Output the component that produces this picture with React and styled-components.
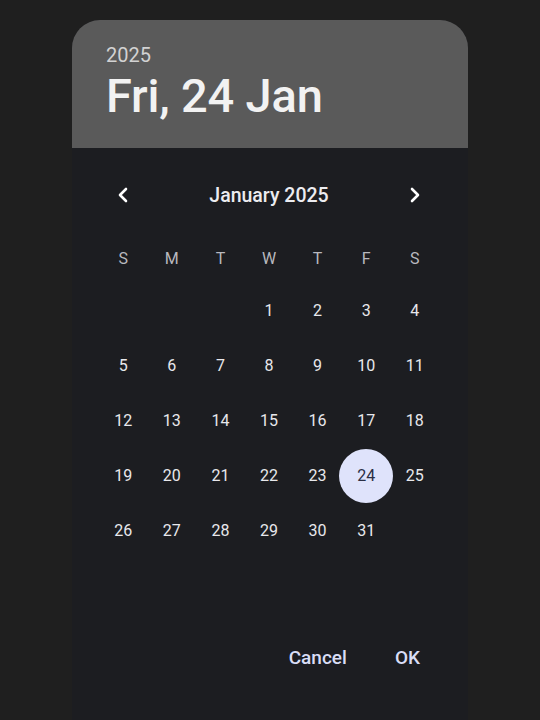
import React from "react";
import styled, { createGlobalStyle } from "styled-components";

const GlobalStyle = createGlobalStyle`
  html, body {
    margin: 0;
    padding: 0;
    background: #1f1f1f;
    font-family: Roboto, "Liberation Sans", sans-serif;
  }
`;

const Page = styled.div`
  width: 540px;
  height: 720px;
  overflow: hidden;
  padding-top: 20px;
  box-sizing: border-box;
`;

const Card = styled.div`
  width: 396px;
  height: 720px;
  margin-left: 72px;
  background: #1c1d21;
  border-radius: 28px 28px 0 0;
  overflow: hidden;
`;

const Header = styled.div`
  height: 128px;
  box-sizing: border-box;
  background: #5a5a5a;
  padding: 22px 0 0 34px;
`;

const Year = styled.div`
  font-size: 20px;
  line-height: 26px;
  color: #d2d2d2;
`;

const BigDate = styled.div`
  font-size: 47px;
  line-height: 56px;
  font-weight: 500;
  color: #f2f2f2;
  letter-spacing: -0.2px;
`;

const Body = styled.div`
  padding: 23px 29px 0 27px;
`;

const Nav = styled.div`
  height: 48px;
  display: flex;
  align-items: center;
  justify-content: space-between;
`;

const NavButton = styled.div`
  width: 48px;
  height: 48px;
  display: flex;
  align-items: center;
  justify-content: center;
`;

const MonthLabel = styled.div`
  font-size: 19.5px;
  font-weight: 500;
  color: #ececf0;
`;

const Grid = styled.div`
  margin-top: 14px;
  display: grid;
  grid-template-columns: repeat(7, minmax(0, 1fr));
  grid-auto-rows: 55px;
  grid-template-rows: 50px;
`;

const WeekDay = styled.div`
  display: flex;
  align-items: center;
  justify-content: center;
  font-size: 16px;
  color: #b8b8be;
`;

const Day = styled.div`
  display: flex;
  align-items: center;
  justify-content: center;
`;

const DayCircle = styled.div`
  flex-shrink: 0;
  width: 54px;
  height: 54px;
  border-radius: 50%;
  display: flex;
  align-items: center;
  justify-content: center;
  font-size: 16px;
  color: ${(p) => (p.$selected ? "#2b2f45" : "#e8e8ec")};
  background: ${(p) => (p.$selected ? "#dfe3fb" : "transparent")};
`;

const Actions = styled.div`
  display: flex;
  justify-content: flex-end;
  gap: 24px;
  padding: 79px 36px 0 0;
`;

const TextButton = styled.div`
  height: 40px;
  padding: 0 12px;
  display: flex;
  align-items: center;
  font-size: 19px;
  font-weight: 500;
  color: #d9ddf6;
`;

const Chevron = ({ dir }) => (
  <svg width="24" height="24" viewBox="0 0 24 24">
    <polyline
      points={dir === "left" ? "15,6 9,12 15,18" : "9,6 15,12 9,18"}
      fill="none"
      stroke="#ffffff"
      strokeWidth="2.6"
      strokeLinecap="round"
      strokeLinejoin="round"
    />
  </svg>
);

const weekDays = ["S", "M", "T", "W", "T", "F", "S"];

const App = () => {
  const cells = [];
  for (let i = 0; i < 3; i++) cells.push(null);
  for (let d = 1; d <= 31; d++) cells.push(d);

  return (
    <Page>
      <GlobalStyle />
      <Card>
        <Header>
          <Year>2025</Year>
          <BigDate>Fri, 24 Jan</BigDate>
        </Header>
        <Body>
          <Nav>
            <NavButton>
              <Chevron dir="left" />
            </NavButton>
            <MonthLabel>January 2025</MonthLabel>
            <NavButton>
              <Chevron dir="right" />
            </NavButton>
          </Nav>
          <Grid>
            {weekDays.map((w, i) => (
              <WeekDay key={"w" + i}>{w}</WeekDay>
            ))}
            {cells.map((d, i) => (
              <Day key={i}>
                {d && <DayCircle $selected={d === 24}>{d}</DayCircle>}
              </Day>
            ))}
          </Grid>
        </Body>
        <Actions>
          <TextButton>Cancel</TextButton>
          <TextButton>OK</TextButton>
        </Actions>
      </Card>
    </Page>
  );
};

export default App;
